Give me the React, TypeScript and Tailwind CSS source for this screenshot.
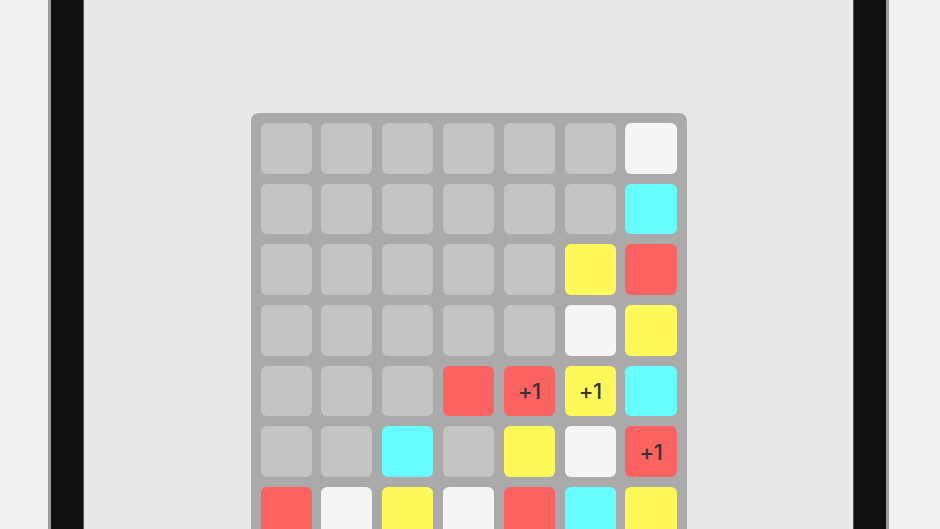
import { memo } from 'react';

type Tile = 'e' | 'w' | 'c' | 'r' | 'y';

// board rows, top to bottom; "+" suffix marks a +1 bonus tile
const BOARD: string[][] = [
  ['e', 'e', 'e', 'e', 'e', 'e', 'w'],
  ['e', 'e', 'e', 'e', 'e', 'e', 'c'],
  ['e', 'e', 'e', 'e', 'e', 'y', 'r'],
  ['e', 'e', 'e', 'e', 'e', 'w', 'y'],
  ['e', 'e', 'e', 'r', 'r+', 'y+', 'c'],
  ['e', 'e', 'c', 'e', 'y', 'w', 'r+'],
  ['r', 'w', 'y', 'w', 'r', 'c', 'y'],
];

const TILE_BG: Record<Tile, string> = {
  e: 'bg-[#c4c4c4]',
  w: 'bg-[#f4f5f7]',
  c: 'bg-[#66fdff]',
  r: 'bg-[#fb6262]',
  y: 'bg-[#fff95b]',
};

const Cell = memo(function Cell({ code }: { code: string }) {
  const tile = code[0] as Tile;
  const bonus = code.endsWith('+');
  return (
    <div
      className={`h-[50.7px] rounded-[6px] flex items-center justify-center ${TILE_BG[tile]}`}
    >
      {bonus && (
        <span className="text-[22px] font-medium text-[#3a3434] leading-none tracking-[-0.5px]">
          +1
        </span>
      )}
    </div>
  );
});

export default function App() {
  return (
    <div
      className="w-full h-[529px] overflow-hidden flex bg-[#f2f1ef]"
      style={{ fontFamily: 'Inter, "Liberation Sans", Arial, sans-serif' }}
    >
      {/* ── Device bezel ─────────────────────────────────────── */}
      <div className="ml-[48px] w-[841px] h-full flex shrink-0 bg-[#111111] border-x-[3px] border-x-[#9c9c9c] px-[32px]">
        {/* ── Screen ──────────────────────────────────────────── */}
        <div className="flex-1 bg-[#e9e9e9] flex justify-center pt-[113px] border-x border-x-[#555]">
          <div className="w-[436px] h-fit rounded-[8px] bg-[#aaaaaa] p-[10px] grid grid-cols-7 gap-x-[9.8px] gap-y-[10px]">
            {BOARD.flat().map((code, i) => (
              <Cell key={i} code={code} />
            ))}
          </div>
        </div>
      </div>
    </div>
  );
}
